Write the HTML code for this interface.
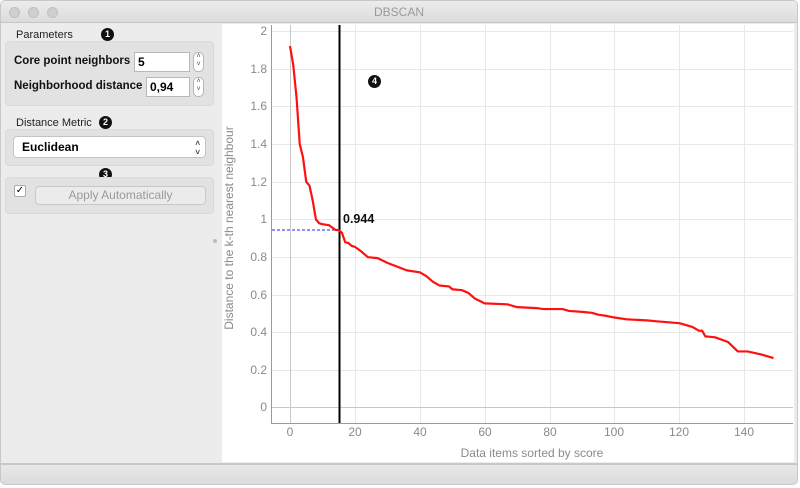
<!DOCTYPE html>
<html><head><style>
*{margin:0;padding:0;box-sizing:border-box}
body{width:800px;height:488px;background:#fff;font-family:"Liberation Sans",sans-serif;position:relative;overflow:hidden}
.win{position:absolute;left:0;top:0;width:798px;height:485px;background:#ececec;border:1px solid #c8c8c8;border-radius:5px;overflow:hidden}
.title{position:absolute;left:0;top:0;width:100%;height:22px;background:linear-gradient(#ececec,#dcdcdc);border-bottom:1px solid #c4c4c4;text-align:center;font-size:12px;line-height:22px;color:#9a9a9a}
.dot{position:absolute;top:6px;width:11px;height:11px;border-radius:50%;background:#cfcfcf;border:1px solid #c0c0c0}
.abs{position:absolute;white-space:nowrap}
.lbl{font-size:11px;color:#222}
.box{position:absolute;background:#e2e2e2;border:1px solid #dadada;border-radius:4px}
.b{font-size:11.5px;font-weight:bold;color:#111}
.inp{position:absolute;background:#fff;border:1px solid #b8b8b8;font-size:12px;font-weight:bold;padding-left:3px;line-height:18px}
.spin{position:absolute;width:11px;height:20px;background:#fff;border:1px solid #b5b5b5;border-radius:5px;font-size:7px;text-align:center;line-height:8px;color:#444}
.num{position:absolute;width:13px;height:13px;border-radius:50%;background:#111;color:#fff;font-size:9px;font-weight:bold;text-align:center;line-height:13px}
</style></head><body>
<div class="win">
<div class="title">DBSCAN</div>
<div class="dot" style="left:8px"></div><div class="dot" style="left:27px"></div><div class="dot" style="left:46px"></div>

<div class="abs lbl" style="left:15px;top:28px">Parameters</div>
<div class="num" style="left:100px;top:27px">1</div>
<div class="box" style="left:4px;top:40px;width:209px;height:65px"></div>
<div class="abs b" style="left:13px;top:54px">Core point neighbors</div>
<div class="inp" style="left:133px;top:51px;width:56px;height:20px">5</div>
<div class="spin" style="left:192px;top:51px">&#708;<br>&#709;</div>
<div class="abs b" style="left:13px;top:79px">Neighborhood distance</div>
<div class="inp" style="left:145px;top:76px;width:44px;height:20px">0,94</div>
<div class="spin" style="left:192px;top:76px">&#708;<br>&#709;</div>

<div class="abs lbl" style="left:15px;top:116px">Distance Metric</div>
<div class="num" style="left:98px;top:115px">2</div>
<div class="box" style="left:4px;top:128px;width:209px;height:37px"></div>
<div class="abs" style="left:12px;top:135px;width:193px;height:22px;background:#fff;border:1px solid #c4c4c4;border-radius:4px;font-size:12px;font-weight:bold;line-height:20px;padding-left:8px">Euclidean<span style="position:absolute;right:5px;top:0;font-size:8px;line-height:9px;color:#444;padding-top:2px">&#708;<br>&#709;</span></div>

<div class="num" style="left:98px;top:167px">3</div>
<div class="box" style="left:4px;top:176px;width:209px;height:37px"></div>
<div class="abs" style="left:13px;top:184px;width:12px;height:12px;background:#fff;border:1px solid #aaa;border-radius:2px;font-size:10px;line-height:10px;text-align:center">&#10003;</div>
<div class="abs" style="left:34px;top:185px;width:171px;height:19px;background:#ebebeb;border:1px solid #c8c8c8;border-radius:4px;font-size:12px;color:#9a9a9a;text-align:center;line-height:17px">Apply Automatically</div>

<div class="abs" style="left:212px;top:238px;width:4px;height:4px;border-radius:50%;background:#bbb"></div>

<div class="abs" style="left:221px;top:23px;width:572px;height:438px;background:#fff"></div>
<svg class="abs" style="left:0;top:0" width="800" height="488">
<g stroke="#e8e8e8" stroke-width="1">
<line x1="270" x2="792" y1="30.5" y2="30.5"/><line x1="270" x2="792" y1="68.5" y2="68.5"/><line x1="270" x2="792" y1="105.5" y2="105.5"/><line x1="270" x2="792" y1="143.5" y2="143.5"/><line x1="270" x2="792" y1="181.5" y2="181.5"/><line x1="270" x2="792" y1="218.5" y2="218.5"/><line x1="270" x2="792" y1="256.5" y2="256.5"/><line x1="270" x2="792" y1="294.5" y2="294.5"/><line x1="270" x2="792" y1="331.5" y2="331.5"/><line x1="270" x2="792" y1="369.5" y2="369.5"/>
<line x1="354.5" x2="354.5" y1="24" y2="422"/><line x1="419.5" x2="419.5" y1="24" y2="422"/><line x1="484.5" x2="484.5" y1="24" y2="422"/><line x1="549.5" x2="549.5" y1="24" y2="422"/><line x1="613.5" x2="613.5" y1="24" y2="422"/><line x1="678.5" x2="678.5" y1="24" y2="422"/><line x1="743.5" x2="743.5" y1="24" y2="422"/>
</g>
<line x1="289.5" x2="289.5" y1="24" y2="422" stroke="#c8c8c8"/>
<line x1="270" x2="792" y1="406.5" y2="406.5" stroke="#c8c8c8"/>
<line x1="270.5" x2="270.5" y1="24" y2="422" stroke="#9a9a9a"/>
<line x1="270" x2="792" y1="422.5" y2="422.5" stroke="#9a9a9a"/>
<g font-size="12" fill="#8a8a8a" text-anchor="end" font-family="Liberation Sans">
<text x="266" y="34">2</text><text x="266" y="72">1.8</text><text x="266" y="109">1.6</text><text x="266" y="147">1.4</text><text x="266" y="185">1.2</text><text x="266" y="222">1</text><text x="266" y="260">0.8</text><text x="266" y="298">0.6</text><text x="266" y="335">0.4</text><text x="266" y="373">0.2</text><text x="266" y="410">0</text>
</g>
<g font-size="12" fill="#8a8a8a" text-anchor="middle" font-family="Liberation Sans">
<text x="289" y="435">0</text><text x="354" y="435">20</text><text x="419" y="435">40</text><text x="484" y="435">60</text><text x="549" y="435">80</text><text x="613" y="435">100</text><text x="678" y="435">120</text><text x="743" y="435">140</text>
<text x="531" y="456">Data items sorted by score</text>
<text transform="translate(232,227) rotate(-90)">Distance to the k-th nearest neighbour</text>
</g>
<line x1="271" x2="338" y1="229" y2="229" stroke="#2020ff" stroke-dasharray="3,2"/>
<line x1="338.5" x2="338.5" y1="24" y2="422" stroke="#000" stroke-width="2"/>
<g transform="translate(289,407) scale(3.245,-188.5)">
<polyline fill="none" stroke="#ff1010" stroke-width="2.2" vector-effect="non-scaling-stroke" stroke-linejoin="round" points="0,1.92 1,1.82 2,1.65 3,1.40 4,1.33 5,1.20 6,1.18 7,1.10 8,1.00 9,0.98 10,0.975 12,0.97 14,0.945 15,0.944 16,0.93 17,0.88 18,0.875 19,0.86 20,0.855 22,0.83 24,0.80 27,0.795 30,0.77 33,0.75 36,0.73 40,0.72 42,0.70 44,0.67 46,0.65 49,0.645 50,0.63 53,0.625 55,0.61 57,0.58 60,0.555 67,0.55 70,0.535 76,0.53 78,0.525 84,0.525 86,0.515 90,0.51 93,0.505 95,0.495 97,0.49 100,0.48 104,0.47 110,0.465 113,0.46 120,0.45 124,0.43 126,0.41 127,0.41 128,0.38 131,0.375 135,0.35 138,0.30 141,0.30 145,0.285 147,0.275 149,0.265"/>
</g>
<text x="342" y="222" font-size="12.5" font-weight="bold" fill="#111" font-family="Liberation Sans">0.944</text>
</svg>
<div class="num" style="left:367px;top:74px">4</div>
<div class="abs" style="left:0;top:462px;width:798px;height:2px;background:#c8c8c8"></div>
<div class="abs" style="left:0;top:464px;width:798px;height:21px;background:linear-gradient(#e8e8e8,#dadada)"></div>
</div>
</body></html>
